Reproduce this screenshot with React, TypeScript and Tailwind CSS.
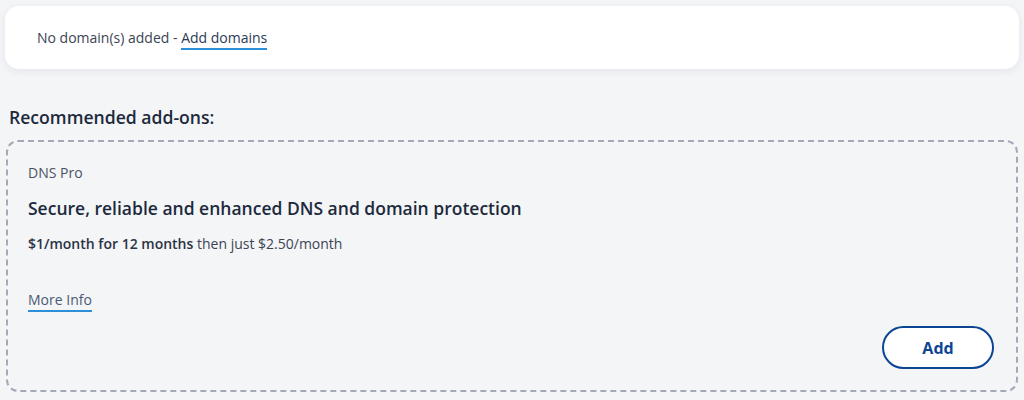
export default function App() {
  return (
    <div
      className="min-h-[400px] bg-[#f4f5f7] px-[5px] pt-[6px] text-[#1d2a3d]"
      style={{ fontFamily: '"Open Sans", "Noto Sans", sans-serif' }}
    >
      {/* Domains card */}
      <div className="flex h-[63px] items-center rounded-[14px] bg-white pl-[32px] shadow-[0_2px_8px_rgba(30,40,60,0.08)]">
        <p className="text-[14px] text-[#3b4454]">
          No domain(s) added -{" "}
          <a href="#" className="border-b-2 border-[#2c8fd8] pb-[1px] text-[#2b3a55]">
            Add domains
          </a>
        </p>
      </div>

      <h2 className="ml-[4px] mt-[36px] text-[17.6px] font-semibold leading-[24px] text-[#1d2a3d]">
        Recommended add-ons:
      </h2>

      {/* Add-on card */}
      <div className="mt-[11px] ml-[1px] mr-[1px] flex h-[252px] flex-col rounded-[12px] border-2 border-dashed border-[#a3a9b6] px-[20px] pt-[21px] pb-[21px]">
        <div className="text-[14px] leading-[20px] text-[#4a5364]">DNS Pro</div>
        <div className="mt-[13px] text-[17.5px] font-semibold leading-[24px] text-[#1d2a3d]">
          Secure, reliable and enhanced DNS and domain protection
        </div>
        <div className="mt-[14px] text-[14px] leading-[20px] text-[#3b4454]">
          <span className="font-semibold text-[#2a3344]">$1/month for 12 months</span> then just $2.50/month
        </div>
        <div className="mt-[33px]">
          <a href="#" className="border-b-2 border-[#2c8fd8] pb-[1px] text-[14px] text-[#4a5a72]">
            More Info
          </a>
        </div>
        <div className="mt-auto flex justify-end pr-[2px]">
          <button className="h-[43px] w-[112px] rounded-full border-[2.5px] border-[#0d4595] bg-white text-[16px] font-bold text-[#0d4595]">
            Add
          </button>
        </div>
      </div>
    </div>
  );
}
